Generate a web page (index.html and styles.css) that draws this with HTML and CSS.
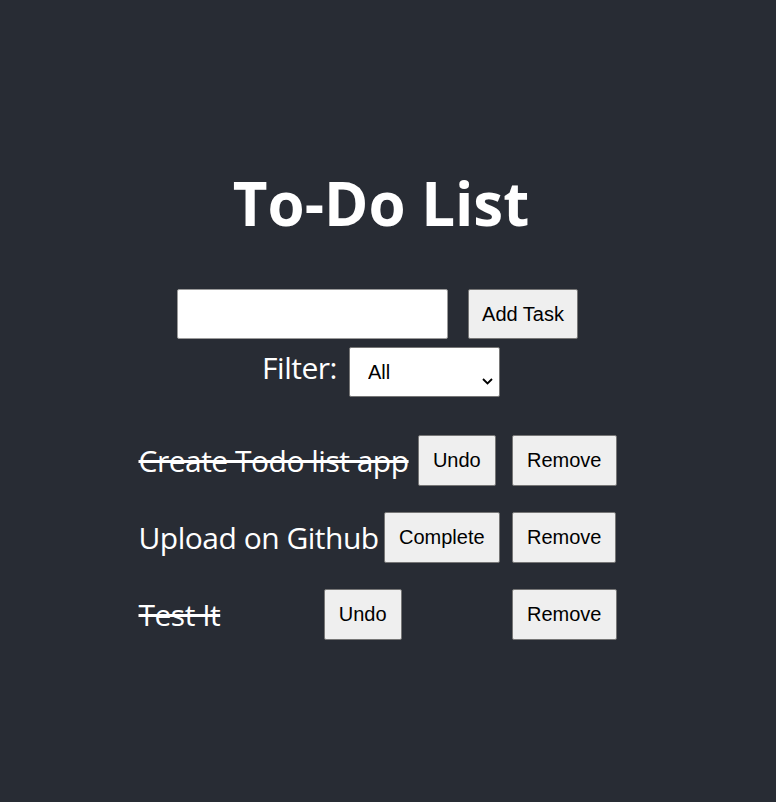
FILE: index.html
```html
<!DOCTYPE html>
<html lang="en">
<head>
<meta charset="utf-8">
<title>To-Do List</title>
<link rel="stylesheet" href="styles.css">
</head>
<body>
<div class="app">
  <h1 class="title">To-Do List</h1>
  <div class="add-row">
    <input class="task-input" type="text">
    <button class="btn btn-add">Add Task</button>
  </div>
  <div class="filter-row">
    <label class="filter-label">Filter:</label>
    <span class="select-wrap">
      <select class="filter-select">
        <option>All</option>
        <option>Completed</option>
        <option>Active</option>
      </select>
      <svg class="chevron" width="11" height="7" viewBox="0 0 11 7"><path d="M1 1 L5.5 5.5 L10 1" fill="none" stroke="#000" stroke-width="1.8"/></svg>
    </span>
  </div>
  <ul class="list">
    <li class="item">
      <span class="item-text done">Create Todo list app</span>
      <button class="btn">Undo</button>
      <button class="btn btn-remove">Remove</button>
    </li>
    <li class="item">
      <span class="item-text">Upload on Github</span>
      <button class="btn">Complete</button>
      <button class="btn btn-remove">Remove</button>
    </li>
    <li class="item">
      <span class="item-text done">Test It</span>
      <button class="btn">Undo</button>
      <button class="btn btn-remove">Remove</button>
    </li>
  </ul>
</div>
</body>
</html>
```

FILE: styles.css
```css
html, body {
  margin: 0;
  padding: 0;
}
body {
  background: #282c34;
  min-height: 802px;
  font-family: "Open Sans", "Noto Sans", sans-serif;
  color: #fff;
}
.app {
  display: flex;
  flex-direction: column;
  align-items: center;
  padding-right: 14px;
}
.title {
  margin: 167px 0 0;
  font-size: 60px;
  line-height: 72px;
  font-weight: 700;
  letter-spacing: 0;
}
.add-row {
  display: flex;
  gap: 20px;
  margin-top: 50px;
  margin-right: 7px;
}
.task-input {
  box-sizing: border-box;
  width: 271px;
  height: 50px;
  border: 1px solid #9a9a9a;
  border-radius: 2px;
  background: #fff;
  padding: 0 8px;
  font-size: 20px;
  font-family: "Liberation Sans", Arial, sans-serif;
}
.btn {
  box-sizing: border-box;
  height: 51px;
  padding: 0 14px;
  font-family: "Liberation Sans", Arial, sans-serif;
  font-size: 20px;
  color: #000;
  background: #efefef;
  border: 1px solid #767676;
  border-radius: 2px;
  white-space: nowrap;
}
.btn-add {
  height: 50px;
  width: 110px;
  padding: 0 10px;
}
.filter-row {
  display: flex;
  align-items: baseline;
  margin-top: 8px;
}
.filter-label {
  font-size: 30px;
  letter-spacing: -0.5px;
  margin-right: 12px;
}
.select-wrap {
  position: relative;
  display: inline-block;
}
.filter-select {
  box-sizing: border-box;
  appearance: none;
  -webkit-appearance: none;
  width: 151px;
  height: 50px;
  padding: 0 0 0 18px;
  font-family: "Liberation Sans", Arial, sans-serif;
  font-size: 20px;
  color: #000;
  background: #fff;
  border: 1px solid #767676;
  border-radius: 2px;
}
.chevron {
  position: absolute;
  right: 7px;
  top: 31px;
}
.list {
  list-style: none;
  margin: 38px 7px 0 0;
  padding: 0;
  width: 478px;
  display: flex;
  flex-direction: column;
  gap: 26px;
}
.item {
  display: flex;
  align-items: center;
  justify-content: space-between;
}
.item-text {
  font-size: 30px;
  letter-spacing: -0.5px;
}
.done {
  text-decoration: line-through;
}
.btn-remove {
  margin-left: 7px;
}
```
